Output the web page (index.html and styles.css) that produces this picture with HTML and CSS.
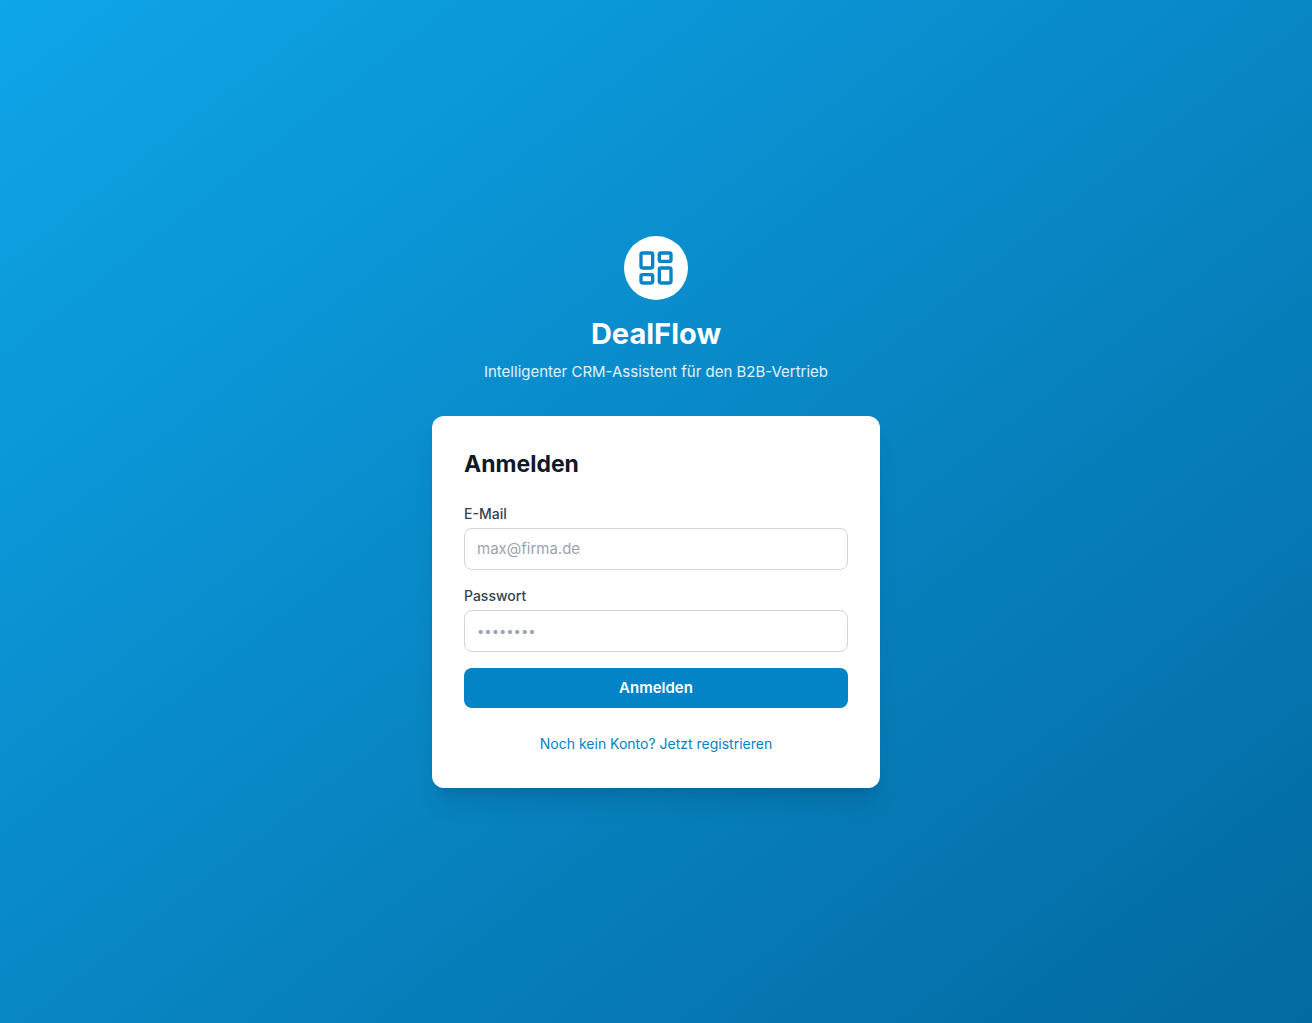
FILE: index.html
```html
<!DOCTYPE html>
<html lang="de">
<head>
<meta charset="utf-8">
<meta name="viewport" content="width=device-width, initial-scale=1">
<title>DealFlow – Anmelden</title>
<link rel="stylesheet" href="styles.css">
</head>
<body>
<main class="login">
  <header class="brand">
    <div class="brand-logo">
      <svg class="brand-icon" viewBox="0 0 24 24" fill="none" stroke="currentColor" stroke-width="2" stroke-linecap="round" stroke-linejoin="round" aria-hidden="true">
        <rect x="3" y="3" width="7" height="9" rx="1"/>
        <rect x="14" y="3" width="7" height="5" rx="1"/>
        <rect x="14" y="12" width="7" height="9" rx="1"/>
        <rect x="3" y="16" width="7" height="5" rx="1"/>
      </svg>
    </div>
    <h1 class="brand-name">DealFlow</h1>
    <p class="brand-tagline">Intelligenter CRM-Assistent für den B2B-Vertrieb</p>
  </header>
  <section class="card">
    <h2 class="card-title">Anmelden</h2>
    <form class="form">
      <div class="field">
        <label class="field-label" for="email">E-Mail</label>
        <input class="field-input" id="email" type="email" placeholder="max@firma.de">
      </div>
      <div class="field">
        <label class="field-label" for="password">Passwort</label>
        <input class="field-input field-password" id="password" type="password" placeholder="••••••••">
      </div>
      <button class="submit" type="submit">Anmelden</button>
    </form>
    <p class="card-footer"><a class="register-link" href="#">Noch kein Konto? Jetzt registrieren</a></p>
  </section>
</main>
</body>
</html>
```
FILE: styles.css
```css
*, *::before, *::after {
  box-sizing: border-box;
}

body {
  margin: 0;
  font-family: Inter, "Liberation Sans", sans-serif;
  font-size: 15px;
  line-height: 24px;
}

h1, h2, p {
  margin: 0;
}

.login {
  min-height: 100vh;
  padding: 16px;
  display: flex;
  flex-direction: column;
  align-items: center;
  justify-content: center;
  gap: 32px;
  background: linear-gradient(to bottom right, #0ea5e9, #0369a1);
}

.brand {
  text-align: center;
}

.brand-logo {
  width: 64px;
  height: 64px;
  margin: 0 auto 16px;
  display: flex;
  align-items: center;
  justify-content: center;
  border-radius: 50%;
  background: #fff;
  color: #0284c7;
}

.brand-icon {
  width: 40px;
  height: 40px;
}

.brand-name {
  margin-bottom: 8px;
  font-size: 29px;
  line-height: 36px;
  font-weight: 700;
  color: #fff;
}

.brand-tagline {
  color: #e0f2fe;
}

.card {
  width: 100%;
  max-width: 448px;
  padding: 32px;
  border-radius: 12px;
  background: #fff;
  box-shadow: 0 20px 25px -5px rgb(0 0 0 / 10%), 0 8px 10px -6px rgb(0 0 0 / 10%);
}

.card-title {
  margin-bottom: 24px;
  font-size: 23px;
  line-height: 32px;
  font-weight: 700;
  color: #111827;
}

.form {
  display: flex;
  flex-direction: column;
  gap: 16px;
}

.field {
  display: flex;
  flex-direction: column;
  gap: 4px;
}

.field-label {
  font-size: 14px;
  line-height: 20px;
  font-weight: 500;
  color: #374151;
}

.field-input {
  width: 100%;
  height: 42px;
  padding: 8px 12px;
  border: 1px solid #d1d5db;
  border-radius: 8px;
  background: #fff;
  font: inherit;
  color: #111827;
}

.field-input::placeholder {
  color: #9ca3af;
}

.field-password {
  font-size: 13px;
}

.submit {
  padding: 8px 16px;
  border: 0;
  border-radius: 8px;
  background: #0284c7;
  font: inherit;
  font-weight: 600;
  color: #fff;
  cursor: pointer;
}

.card-footer {
  margin-top: 24px;
  text-align: center;
}

.register-link {
  font-size: 14px;
  line-height: 20px;
  color: #0284c7;
  text-decoration: none;
}
```
